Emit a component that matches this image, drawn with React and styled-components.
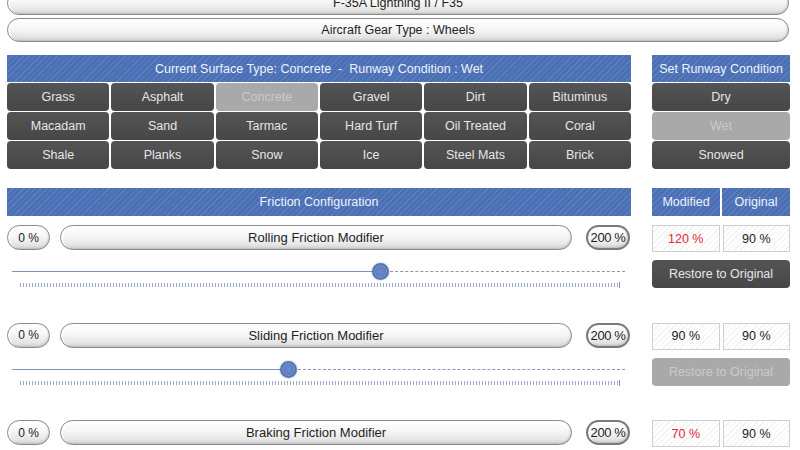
import React from 'react';
import styled, { createGlobalStyle } from 'styled-components';

const GlobalStyle = createGlobalStyle`
  html, body {
    margin: 0;
    padding: 0;
    background: #ffffff;
    overflow: hidden;
  }
  body {
    font-family: "Liberation Sans", Arial, sans-serif;
  }
`;

const surfaces = [
  'Grass', 'Asphalt', 'Concrete', 'Gravel', 'Dirt', 'Bituminus',
  'Macadam', 'Sand', 'Tarmac', 'Hard Turf', 'Oil Treated', 'Coral',
  'Shale', 'Planks', 'Snow', 'Ice', 'Steel Mats', 'Brick',
];

const conditions = ['Dry', 'Wet', 'Snowed'];

const frictions = [
  { label: 'Rolling Friction Modifier', modified: 120, original: 90, changed: true },
  { label: 'Sliding Friction Modifier', modified: 90, original: 90, changed: false },
  { label: 'Braking Friction Modifier', modified: 70, original: 90, changed: true },
];

// #region Styles

const Page = styled.div`
  width: 800px;
  height: 450px;
  padding: 0 10px 0 7px;
  box-sizing: border-box;
  overflow: hidden;
`;

const Pill = styled.div`
  height: 24px;
  box-sizing: border-box;
  border: 1px solid #8a8a8a;
  border-radius: 14px;
  background: linear-gradient(180deg, #ffffff 0%, #f6f6f6 45%, #e6e6e6 80%, #d4d4d4 100%);
  box-shadow: inset 2px 1px 1px rgba(255,255,255,0.9), inset -1px -1px 2px rgba(0,0,0,0.12);
  display: flex;
  align-items: center;
  justify-content: center;
  font-family: "Liberation Sans", Arial, sans-serif;
  font-size: 12.5px;
  color: #1e1e1e;
  white-space: nowrap;
`;

const TopPill = styled(Pill)`
  margin-top: ${p => p.mt}px;
  width: 782px;
`;

const Columns = styled.div`
  display: grid;
  grid-template-columns: 624px 138px;
  column-gap: 21px;
  margin-top: ${p => p.mt}px;
`;

const Header = styled.div`
  height: ${p => p.h || 27}px;
  display: flex;
  align-items: center;
  justify-content: center;
  background-color: #4b70b6;
  background-image: repeating-linear-gradient(
    135deg,
    rgba(255,255,255,0.10) 0px,
    rgba(255,255,255,0.10) 1px,
    transparent 1px,
    transparent 4px
  );
  color: #eef2fa;
  font-family: "Liberation Sans", Arial, sans-serif;
  font-size: 12.5px;
  white-space: nowrap;
`;

const HeaderPair = styled.div`
  display: grid;
  grid-template-columns: 1fr 1fr;
  column-gap: 2px;
`;

const ButtonGrid = styled.div`
  display: grid;
  grid-template-columns: repeat(${p => p.cols}, 1fr);
  gap: 1px 2px;
  margin-top: 1px;
`;

const DarkButton = styled.div`
  height: 28px;
  display: flex;
  align-items: center;
  justify-content: center;
  border-radius: 4px;
  background: ${p => p.disabled ? '#a9a9a9' : 'linear-gradient(180deg, #545454 0%, #474747 100%)'};
  color: ${p => p.disabled ? '#c9c9c9' : '#e6e6e6'};
  font-family: "Liberation Sans", Arial, sans-serif;
  font-size: 12.5px;
  white-space: nowrap;
`;

const FrictionBlock = styled.div`
  display: grid;
  grid-template-columns: 624px 138px;
  column-gap: 21px;
  height: 97.5px;
  padding-top: 9px;
  box-sizing: border-box;
`;

const PillRow = styled.div`
  display: flex;
  align-items: center;
`;

const SmallPill = styled(Pill)`
  width: 43px;
  height: 25px;
  flex: none;
  font-size: 12px;
`;

const MaxPill = styled(Pill)`
  width: 44px;
  height: 25px;
  flex: none;
  margin-left: 14px;
  border: 2px solid #7a7a7a;
  font-size: 13px;
  letter-spacing: -0.4px;
`;

const WidePill = styled(Pill)`
  width: 512px;
  height: 25px;
  flex: none;
  margin-left: 10px;
  font-size: 13px;
`;

const SliderArea = styled.div`
  position: relative;
  height: 44px;
  margin-left: 5px;
  width: 613px;
`;

const TrackSolid = styled.div`
  position: absolute;
  left: 0;
  top: 21px;
  height: 1px;
  background: #8192b9;
`;

const TrackDashed = styled.div`
  position: absolute;
  right: 0;
  top: 21px;
  border-top: 1px dashed #8e96aa;
`;

const Thumb = styled.div`
  position: absolute;
  top: 13px;
  width: 17px;
  height: 17px;
  margin-left: -8px;
  border-radius: 50%;
  box-sizing: border-box;
  border: 2px solid #5474b6;
  background: radial-gradient(circle at 50% 50%, #6f8cc8 0%, #5f7fc2 50%, #4f6fb1 100%);
  box-shadow: 0 0 2px rgba(60,90,150,0.6), inset 0 0 0 1px rgba(150,175,220,0.6);
`;

const Ticks = styled.div`
  position: absolute;
  left: 8px;
  top: 33px;
  width: 599px;
  height: 4px;
  background: repeating-linear-gradient(90deg, #8d9cc0 0px, #8d9cc0 1px, transparent 1px, transparent 3px);
  opacity: 0.85;
  &::after {
    content: '';
    position: absolute;
    right: -1px;
    top: -1px;
    width: 1px;
    height: 6px;
    background: #7180a6;
  }
`;

const RightStack = styled.div`
  display: flex;
  flex-direction: column;
  gap: 8px;
`;

const ValuePair = styled.div`
  display: grid;
  grid-template-columns: 1fr 1fr;
  column-gap: 3px;
`;

const ValueBox = styled.div`
  height: 27px;
  box-sizing: border-box;
  display: flex;
  align-items: center;
  justify-content: center;
  border: 1px solid #cfcfcf;
  background-color: #ffffff;
  background-image: repeating-linear-gradient(
    135deg,
    rgba(0,0,0,0.05) 0px,
    rgba(0,0,0,0.05) 1px,
    transparent 1px,
    transparent 4px
  );
  color: ${p => p.red ? '#e0283a' : '#222'};
  font-family: "Liberation Sans", Arial, sans-serif;
  font-size: 12.5px;
`;

const RestoreButton = styled(DarkButton)`
  font-size: 12.5px;
`;

// #endregion

function FrictionRow({ item }) {
  const pos = (item.modified / 200) * 613;
  return (
    <FrictionBlock>
      <div>
        <PillRow>
          <SmallPill>0 %</SmallPill>
          <WidePill>{item.label}</WidePill>
          <MaxPill>200 %</MaxPill>
        </PillRow>
        <SliderArea>
          <TrackSolid style={{ width: pos }} />
          <TrackDashed style={{ width: 613 - pos }} />
          <Ticks />
          <Thumb style={{ left: pos }} />
        </SliderArea>
      </div>
      <RightStack>
        <ValuePair>
          <ValueBox red={item.changed}>{item.modified} %</ValueBox>
          <ValueBox>{item.original} %</ValueBox>
        </ValuePair>
        <RestoreButton disabled={!item.changed}>Restore to Original</RestoreButton>
      </RightStack>
    </FrictionBlock>
  );
}

export default function App() {
  return (
    <>
      <GlobalStyle />
      <Page>
        <TopPill mt={-9}>F-35A Lightning II / F35</TopPill>
        <TopPill mt={3}>Aircraft Gear Type : Wheels</TopPill>

        <Columns mt={13}>
          <div>
            <Header>Current Surface Type: Concrete&nbsp; -&nbsp; Runway Condition : Wet</Header>
            <ButtonGrid cols={6}>
              {surfaces.map(s => (
                <DarkButton key={s} disabled={s === 'Concrete'}>{s}</DarkButton>
              ))}
            </ButtonGrid>
          </div>
          <div>
            <Header>Set Runway Condition</Header>
            <ButtonGrid cols={1}>
              {conditions.map(c => (
                <DarkButton key={c} disabled={c === 'Wet'}>{c}</DarkButton>
              ))}
            </ButtonGrid>
          </div>
        </Columns>

        <Columns mt={19}>
          <Header h={28}>Friction Configuration</Header>
          <HeaderPair>
            <Header h={28}>Modified</Header>
            <Header h={28}>Original</Header>
          </HeaderPair>
        </Columns>

        {frictions.map(f => (
          <FrictionRow key={f.label} item={f} />
        ))}
      </Page>
    </>
  );
}
